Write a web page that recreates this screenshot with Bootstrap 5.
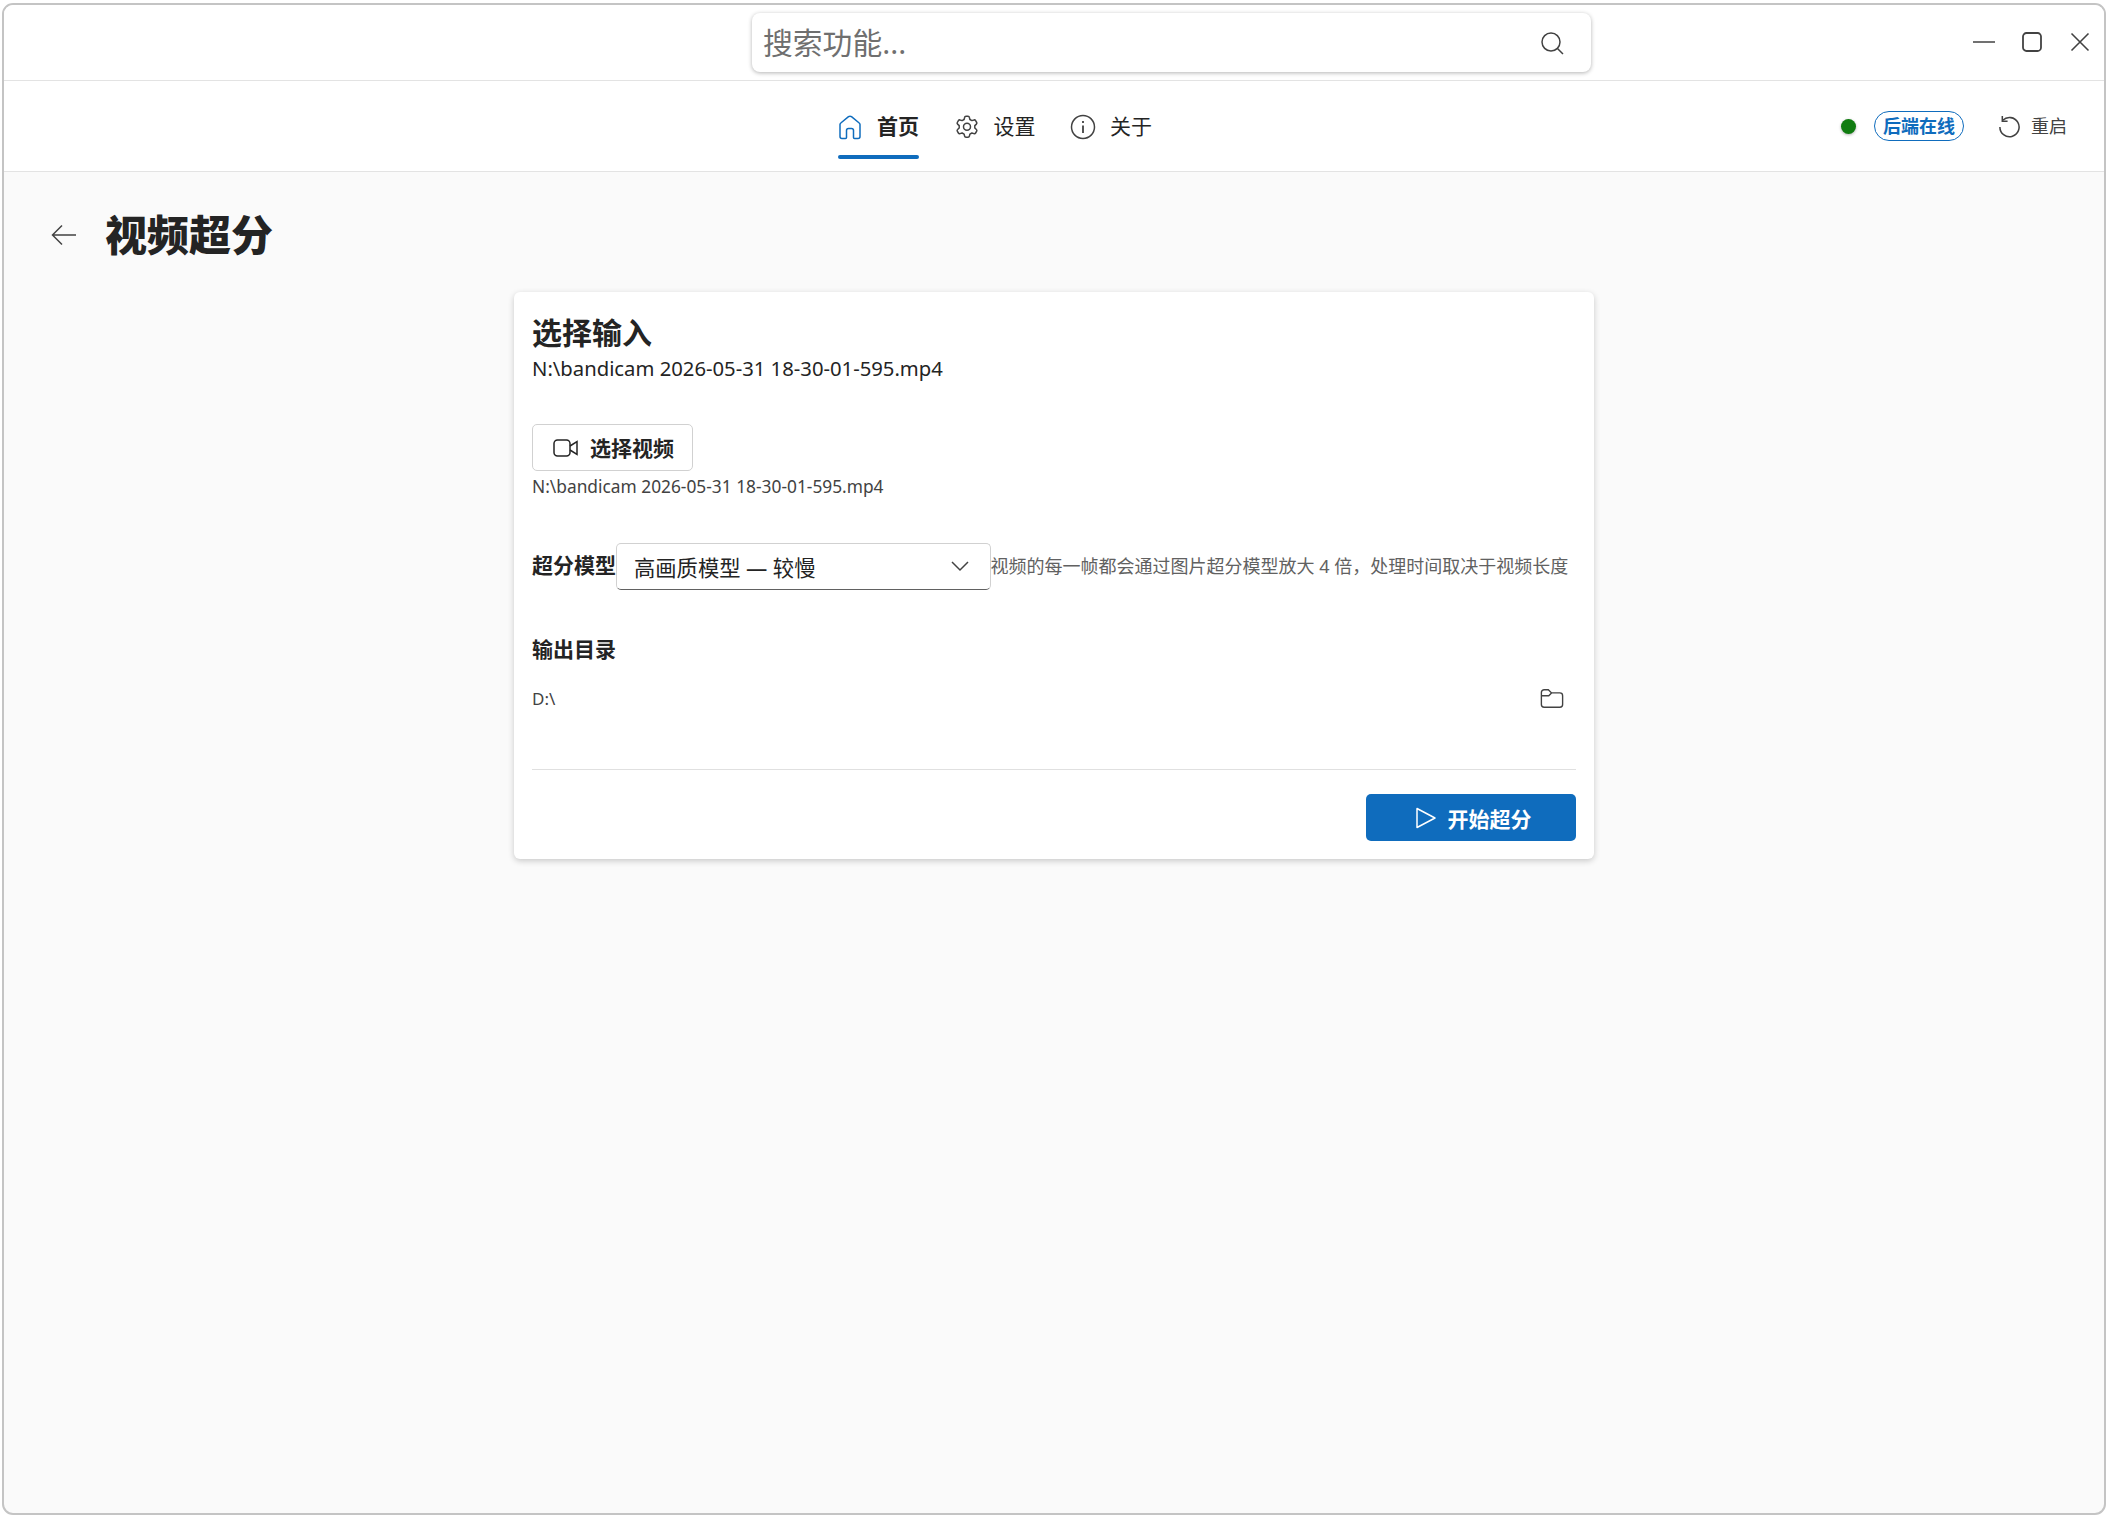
<!DOCTYPE html>
<html lang="zh-CN">
<head>
  <meta charset="utf-8">
  <title>视频超分</title>
  <link href="https://cdn.jsdelivr.net/npm/bootstrap@5.3.0/dist/css/bootstrap.min.css" rel="stylesheet">
  <style>
    html, body { height: 100%; }
    body { background: #fff; font-family: "Noto Sans", "Noto Sans CJK SC", sans-serif; color: #242424; overflow: hidden; }
    .app-window { height: 1512px; margin: 3px 1px 0 2px; border: 2px solid #c4c4c4; border-radius: 11px; overflow: hidden; background: #fafafa; display: flex; flex-direction: column; }
    .title-row { height: 76px; background: #fff; border-bottom: 1px solid #e3e3e3; position: relative; flex: none; }
    .search-box { width: 839px; height: 59px; margin-left: 748px; margin-top: 8px; background: #fff; border-radius: 8px; box-shadow: 0 1px 4px rgba(0,0,0,.3); padding: 0 26px 0 11px; font-size: 29.8px; color: #6f6f6f; }
    .search-box span { padding-top: 2px; }
    .win-btns { position: absolute; right: 13px; top: 26px; gap: 26px; }
    .nav-row { height: 91px; background: #fff; border-bottom: 1px solid #e3e3e3; position: relative; flex: none; }
    .nav-tabs-own { position: absolute; left: 834px; top: 0; height: 100%; gap: 34.5px; }
    .nav-tab { height: 100%; display: flex; align-items: center; gap: 14px; font-size: 21px; padding-top: 2px; color: #242424; position: relative; }
    .nav-tab.active-tab { font-weight: 700; gap: 15px; }
    .nav-tab.active-tab::after { content: ""; position: absolute; left: 0; right: 0; bottom: 12px; height: 4px; border-radius: 2px; background: #0f6cbd; }
    .nav-right { position: absolute; right: 37px; top: 0; height: 100%; }
    .status-dot { width: 15px; height: 15px; border-radius: 50%; background: #107c10; box-shadow: 0 1px 3px rgba(0,0,0,.3); margin-right: 18px; }
    .status-pill { height: 30px; width: 90px; border: 1px solid #0f6cbd; border-radius: 15px; color: #0f6cbd; font-size: 18px; font-weight: 700; background: #fff; line-height: 1; margin-right: 34px; }
    .restart { font-size: 18px; gap: 10px; color: #424242; }
    .page-body { padding: 0 0 0 47px; flex: 1; }
    .page-head { height: 118px; gap: 28px; padding-top: 9px; }
    .page-head h1 { font-size: 42px; font-weight: 900; margin: 0; color: #242424; }
    .back-arrow { margin-bottom: 2px; }
    .panel { width: 1080px; height: 567px; margin-left: 463px; margin-top: 2px; background: #fff; border-radius: 6px; box-shadow: 0 2px 6px rgba(0,0,0,.2); padding: 20px 18px 18px; display: flex; flex-direction: column; }
    .panel h2 { font-size: 30px; font-weight: 700; line-height: 42px; margin: 0; }
    .path-main { font-size: 20.25px; line-height: 28px; }
    .pick-btn { width: 161px; height: 47px; margin-top: 42px; background: #fff; border: 1px solid #d1d1d1; border-radius: 5px; font-size: 21px; font-weight: 700; gap: 11px; color: #242424; padding: 0 0 0 2px; }
    .btn-txt { padding-top: 3px; }
    .path-small { font-size: 17.33px; line-height: 24px; margin-top: 2.5px; color: #424242; }
    .model-row { margin-top: 45px; height: 47px; }
    .field-label { font-size: 21px; font-weight: 700; line-height: 28px; }
    .model-row .field-label { padding-bottom: 2px; }
    .out-label { margin-top: 45px; }
    .model-select { width: 374.5px; height: 47px; border: 1px solid #d1d1d1; border-bottom-color: #616161; border-radius: 5px; padding: 0 20px 0 17px; font-size: 21.3px; background: #fff; flex: none; }
    .model-select span { padding-top: 3px; }
    .model-note { font-size: 18px; color: #616161; white-space: nowrap; }
    .out-path { font-size: 17px; color: #424242; margin-top: 16.5px; height: 40px; padding-right: 12px; }
    .out-path svg { margin-bottom: 2px; }
    .panel-foot { border-top: 1px solid #e0e0e0; margin-top: auto; padding-top: 24px; }
    .go-btn { width: 210px; height: 47px; background: #0f6cbd; border: 0; border-radius: 5px; color: #fff; font-size: 21px; font-weight: 700; gap: 11px; padding: 0 0 0 4px; }
    .go-btn .btn-txt { padding-top: 4px; }
    svg { display: block; flex: none; }
  </style>
</head>
<body>
  <div class="app-window">
    <!-- title bar -->
    <div class="title-row">
      <div class="search-box d-flex align-items-center justify-content-between">
        <span>搜索功能...</span>
        <svg width="26" height="26" viewBox="0 0 26 26" fill="none" stroke="#424242" stroke-width="1.5"><circle cx="12" cy="12" r="9"/><path d="M18.5 18.5 24 24"/></svg>
      </div>
      <div class="win-btns d-flex align-items-center">
        <svg width="22" height="22" viewBox="0 0 22 22" stroke="#424242" stroke-width="1.6"><path d="M0 11h22"/></svg>
        <svg width="22" height="22" viewBox="0 0 22 22" fill="none" stroke="#424242" stroke-width="1.8"><rect x="2" y="2" width="18" height="18" rx="3.5"/></svg>
        <svg width="22" height="22" viewBox="0 0 22 22" stroke="#424242" stroke-width="1.6"><path d="M2.500 2.500l17 17M19.500 2.500l-17 17"/></svg>
      </div>
    </div>

    <!-- nav -->
    <div class="nav-row">
      <div class="nav-tabs-own d-flex">
        <a class="nav-tab active-tab text-decoration-none">
          <svg width="24" height="26" viewBox="0 0 24 26" fill="none" stroke="#0f6cbd" stroke-width="1.5"><path d="M2 10.500Q2 9.600 2.800 9L10.500 2.700Q12 1.600 13.500 2.700L21.200 9Q22 9.600 22 10.500V22.500a2 2 0 0 1-2 2h-3.500a1 1 0 0 1-1-1V16.500a2 2 0 0 0-2-2h-3a2 2 0 0 0-2 2V23.500a1 1 0 0 1-1 1H4a2 2 0 0 1-2-2z"/></svg>
          首页
        </a>
        <a class="nav-tab text-decoration-none">
          <svg width="26" height="26" viewBox="0 0 26 26" fill="none" stroke="#424242" stroke-width="1.5" stroke-linejoin="round"><circle cx="13" cy="12.800" r="3.500"/><path d="M12 2.300H14Q15.200 2.300 15.400 3.400L15.900 5.500 17.900 6.600 19.900 6Q21 5.600 21.600 6.600L22.700 8.500Q23.200 9.400 22.400 10.100L20.800 11.600V14L22.400 15.500Q23.200 16.200 22.700 17.100L21.600 19Q21 20 19.900 19.600L17.900 19 15.900 20.100 15.400 22.200Q15.200 23.300 14 23.300H12Q10.800 23.300 10.600 22.200L10.100 20.100 8.100 19 6.100 19.600Q5 20 4.400 19L3.300 17.100Q2.800 16.200 3.600 15.500L5.200 14V11.600L3.600 10.100Q2.800 9.400 3.300 8.500L4.400 6.600Q5 5.600 6.100 6L8.100 6.600 10.100 5.500 10.600 3.400Q10.800 2.300 12 2.300Z"/></svg>
          <span>设置</span>
        </a>
        <a class="nav-tab text-decoration-none">
          <svg width="26" height="26" viewBox="0 0 26 26" fill="none" stroke="#424242" stroke-width="1.500"><circle cx="13" cy="13" r="11.500"/><path d="M13 11.500v7.500M13 7v2" stroke-width="1.800"/></svg>
          <span>关于</span>
        </a>
      </div>
      <div class="nav-right d-flex align-items-center">
        <span class="status-dot"></span>
        <span class="status-pill d-flex align-items-center justify-content-center">后端在线</span>
        <span class="restart d-flex align-items-center">
          <svg width="23" height="23" viewBox="0 0 24 24" fill="none" stroke="#424242" stroke-width="1.600"><path d="M5 5.500A10 10 0 1 1 2 12.500"/><path d="M4.500 1v5.500H10"/></svg>
          重启
        </span>
      </div>
    </div>

    <!-- page -->
    <div class="page-body">
      <div class="page-head d-flex align-items-center">
        <svg class="back-arrow" width="26" height="22" viewBox="0 0 26 22" fill="none" stroke="#424242" stroke-width="1.500"><path d="M25 11H2M11 1.500 1.500 11l9.500 9.500"/></svg>
        <h1>视频超分</h1>
      </div>
      <div class="panel">
        <h2>选择输入</h2>
        <div class="path-main">N:\bandicam 2026-05-31 18-30-01-595.mp4</div>
        <button class="pick-btn btn d-flex align-items-center justify-content-center">
          <svg width="26" height="20" viewBox="0 0 26 20" fill="none" stroke="#242424" stroke-width="1.500"><rect x="1" y="2" width="16" height="16" rx="3.500"/><path d="M17 8l7-4.500v13L17 12"/></svg>
          <span class="btn-txt">选择视频</span>
        </button>
        <div class="path-small">N:\bandicam 2026-05-31 18-30-01-595.mp4</div>
        <div class="model-row d-flex align-items-center">
          <span class="field-label">超分模型</span>
          <div class="model-select d-flex align-items-center justify-content-between">
            <span>高画质模型 — 较慢</span>
            <svg width="20" height="12" viewBox="0 0 20 12" fill="none" stroke="#424242" stroke-width="1.500"><path d="M2 2l8 8 8-8"/></svg>
          </div>
          <span class="model-note">视频的每一帧都会通过图片超分模型放大 4 倍，处理时间取决于视频长度</span>
        </div>
        <div class="field-label out-label">输出目录</div>
        <div class="out-path d-flex align-items-center justify-content-between">
          <span>D:\</span>
          <svg width="24" height="22" viewBox="0 0 26 22" fill="none" stroke="#424242" stroke-width="1.500"><path d="M1.500 5a3 3 0 0 1 3-3h4.500l3.500 3.500h9a3 3 0 0 1 3 3V18a3 3 0 0 1-3 3h-17a3 3 0 0 1-3-3z"/><path d="M1.500 8.500h8l3-3"/></svg>
        </div>
        <div class="panel-foot d-flex justify-content-end">
          <button class="go-btn btn d-flex align-items-center justify-content-center">
            <svg width="22" height="24" viewBox="0 0 22 24" fill="none" stroke="#fff" stroke-width="1.500" stroke-linejoin="round"><path d="M2 2.500v19l18-9.500z"/></svg>
            <span class="btn-txt">开始超分</span>
          </button>
        </div>
      </div>
    </div>
  </div>
  <script src="https://cdn.jsdelivr.net/npm/bootstrap@5.3.0/dist/js/bootstrap.bundle.min.js"></script>
</body>
</html>
